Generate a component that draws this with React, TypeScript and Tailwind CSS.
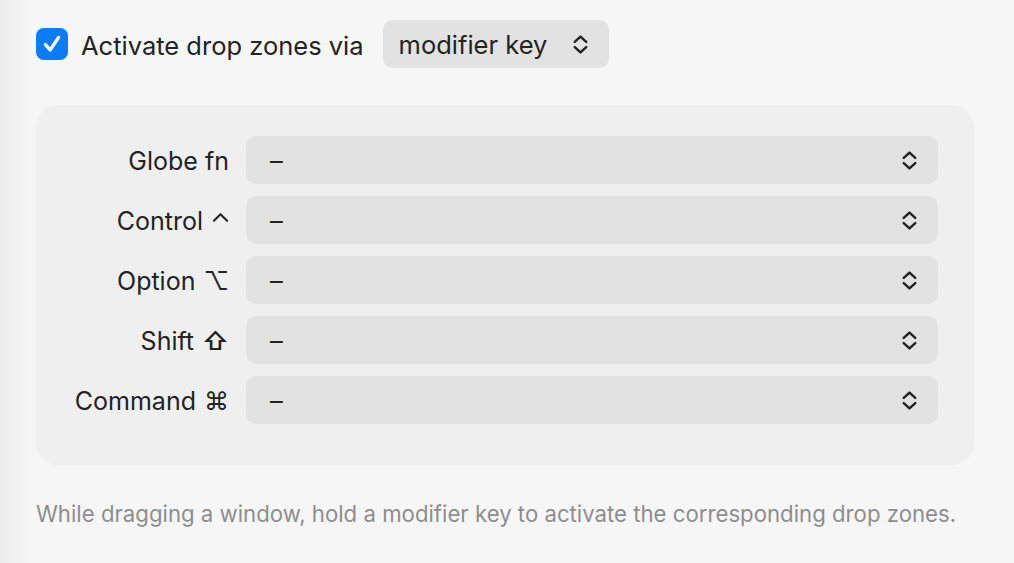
import React, { useState } from 'react';

const ControlGlyph = () => (
  <svg viewBox="0 0 18 12" className="inline-block w-[17px] h-[12px] ml-[9px] mb-[10px]" fill="none" stroke="currentColor" strokeWidth={2.2} strokeLinecap="round" strokeLinejoin="round">
    <path d="M2 10 L9 3 L16 10" />
  </svg>
);

const modifiers: { name: string; glyph: React.ReactNode }[] = [
  { name: 'Globe fn', glyph: null },
  { name: 'Control', glyph: <ControlGlyph /> },
  { name: 'Option', glyph: <span className="ml-[8px]">⌥</span> },
  { name: 'Shift', glyph: <span className="ml-[8px] font-semibold">⇧</span> },
  { name: 'Command', glyph: <span className="ml-[8px]">⌘</span> },
];

const UpDownChevron: React.FC<{ className?: string }> = ({ className }) => (
  <svg viewBox="0 0 16 20" className={className} fill="none" stroke="currentColor" strokeWidth={2.3} strokeLinecap="round" strokeLinejoin="round">
    <path d="M2.5 7.5 L8 2.5 L13.5 7.5" />
    <path d="M2.5 12.5 L8 17.5 L13.5 12.5" />
  </svg>
);

const PopupButton: React.FC<{ label: string; className?: string; pad?: string }> = ({ label, className = '', pad = 'pl-[24px]' }) => (
  <button className={`flex items-center justify-between h-[48px] rounded-[10px] bg-[#e2e2e2] ${pad} pr-[20px] text-[25.5px] text-[#232323] ${className}`}>
    <span className="leading-none pt-[2px]">{label}</span>
    <UpDownChevron className="w-[17px] h-[21px] text-[#222]" />
  </button>
);

export default function App() {
  const [enabled, setEnabled] = useState(true);

  return (
    <div
      className="w-[1014px] h-[563px] bg-[linear-gradient(to_right,#ebebeb,#f6f6f6_32px)] pl-[36px] pt-[20px] text-[#232323]"
      style={{ fontFamily: 'Inter, "Noto Sans", "DejaVu Sans", sans-serif' }}
    >
      {/* Top toggle row */}
      <div className="flex items-center h-[48px]">
        <button
          onClick={() => setEnabled(!enabled)}
          className={`flex items-center justify-center w-[32px] h-[32px] rounded-[8px] ${enabled ? 'bg-[#0b7bff]' : 'bg-white border border-gray-300'}`}
        >
          {enabled && (
            <svg viewBox="0 0 20 20" className="w-[24px] h-[24px]" fill="none" stroke="white" strokeWidth={2.8} strokeLinecap="round" strokeLinejoin="round">
              <path d="M4.5 10.5 L8.5 15 L15.5 4.5" />
            </svg>
          )}
        </button>
        <span className="ml-[13px] pt-[3px] text-[25.5px] leading-none">Activate drop zones via</span>
        <PopupButton label="modifier key" className="ml-[19px] w-[226px]" pad="pl-[16px]" />
      </div>

      {/* Modifier key mapping panel */}
      <div className="mt-[37px] w-[938px] h-[360px] rounded-[22px] bg-[#efefef] pt-[31px]">
        <div className="flex flex-col gap-[12px]">
          {modifiers.map((m) => (
            <div key={m.name} className="flex items-center">
              <span className="flex items-center justify-end w-[193px] pt-[3px] text-[25px] leading-none whitespace-nowrap">
                {m.name}
                {m.glyph}
              </span>
              <PopupButton label="–" className="ml-[17px] w-[692px]" />
            </div>
          ))}
        </div>
      </div>

      <p className="mt-[38px] text-[22.2px] text-[#8e8e8e] leading-none whitespace-nowrap">
        While dragging a window, hold a modifier key to activate the corresponding drop zones.
      </p>
    </div>
  );
}
